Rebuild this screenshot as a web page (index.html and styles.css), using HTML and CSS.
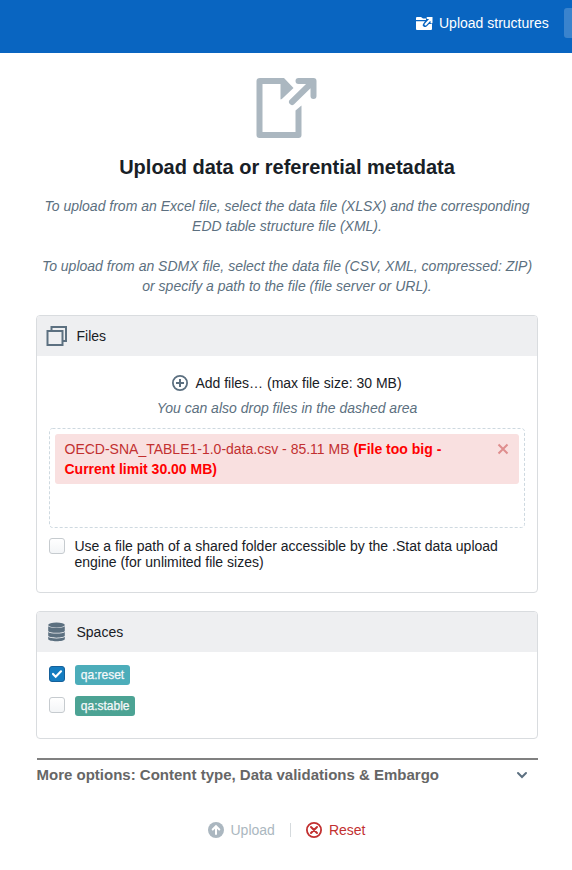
FILE: index.html
```html
<!DOCTYPE html>
<html lang="en">
<head>
<meta charset="utf-8">
<title>Upload data</title>
<link rel="stylesheet" href="styles.css">
</head>
<body>
<header class="navbar">
  <a class="nav-link">
    <svg class="nav-icon" width="18" height="16" viewBox="0 0 18 16"><path fill="#fff" d="M1 3Q1 2 2 2h4l2 1.500h3V5H1zM1 6.200h9L8 9q-1 1.500.5 2.500t3 0L14 9h3v5q0 1-1 1H2q-1 0-1-1z"/><path d="M12.500 3H17v4.500M16.500 3.500l-6 6" fill="none" stroke="#0965c1" stroke-width="3.500"/><path d="M12.500 3H16.500v4.500M16 3.500L10.500 9.500" fill="none" stroke="#fff" stroke-width="2" stroke-linecap="round"/></svg>
    <span>Upload structures</span>
  </a>
  <span class="nav-button"></span>
</header>
<main class="page">
  <section class="intro">
    <svg class="intro-icon" width="62" height="60" viewBox="0 0 62 60" fill="#abb7c0">
      <path d="M4 0H28L37.500 10 28.500 18.500Q24.500 22.500 24.500 21V6H6.500v48h33V32.500l6-5V57q0 3-3 3H3.500Q.5 60 .5 57V3Q.5 0 4 0z"/>
      <path d="M42.500 3h15v15M56.500 4L36 24" fill="none" stroke="#abb7c0" stroke-width="6" stroke-linecap="round" stroke-linejoin="round"/>
    </svg>
    <h1 class="title">Upload data or referential metadata</h1>
    <p class="hint">To upload from an Excel file, select the data file (XLSX) and the corresponding<br>EDD table structure file (XML).</p>
    <p class="hint">To upload from an SDMX file, select the data file (CSV, XML, compressed: ZIP)<br>or specify a path to the file (file server or URL).</p>
  </section>

  <section class="card files">
    <div class="card-head">
      <svg width="20" height="20" viewBox="0 0 20 20" fill="none" stroke="#5c7080" stroke-width="2"><path d="M.5 5h15v14H.5zM4.500 4V1h14.500v14h-3"/></svg>
      <span>Files</span>
    </div>
    <div class="card-body">
      <div class="add">
        <svg width="16" height="16" viewBox="0 0 16 16" fill="none" stroke="#5c7080"><circle cx="8" cy="8" r="7.100" stroke-width="1.800"/><path d="M8 4v8M4 8h8" stroke-width="2"/></svg>
        <span>Add files… (max file size: 30 MB)</span>
      </div>
      <div class="drop-hint">You can also drop files in the dashed area</div>
      <div class="dropzone">
        <svg class="dash" width="476" height="100"><rect x="0.500" y="0.500" width="475" height="99" rx="3"/></svg>
        <div class="file-item">
          <span class="file-name">OECD-SNA_TABLE1-1.0-data.csv - 85.11 MB <strong>(File too big -<br>Current limit 30.00 MB)</strong></span>
          <svg width="12" height="12" viewBox="0 0 12 12"><path d="M1.500 1.500l9 9M10.500 1.500l-9 9" stroke="#df8e8e" stroke-width="2"/></svg>
        </div>
      </div>
      <label class="check-row path-row"><span class="box"></span><span>Use a file path of a shared folder accessible by the .Stat data upload<br>engine (for unlimited file sizes)</span></label>
    </div>
  </section>

  <section class="card spaces">
    <div class="card-head">
      <svg width="20" height="20" viewBox="0 0 20 20" fill="#5c7080"><ellipse cx="9.500" cy="3" rx="8.300" ry="2.600"/><path d="M1.200 4.200c2 2.200 14.600 2.200 16.600 0V8.700c0 2.700-16.600 2.700-16.600 0zM1.200 9.900c2 2.200 14.600 2.200 16.600 0v3.700c0 2.700-16.600 2.700-16.600 0zM1.200 14.800c2 2.200 14.600 2.200 16.600 0v2.200c0 3-16.600 3-16.600 0z"/></svg>
      <span>Spaces</span>
    </div>
    <div class="space-list">
      <label class="check-row"><span class="box checked"><svg width="16" height="16" viewBox="0 0 16 16"><path d="M4 8l2.700 2.700L12 5.300" fill="none" stroke="#fff" stroke-width="2.200" stroke-linecap="round"/></svg></span><span class="tag reset-tag">qa:reset</span></label>
      <label class="check-row"><span class="box"></span><span class="tag stable-tag">qa:stable</span></label>
    </div>
  </section>

  <div class="more">
    <span>More options: Content type, Data validations &amp; Embargo</span>
    <svg width="16" height="16" viewBox="0 0 16 16"><path d="M4 6l4 4 4-4" fill="none" stroke="#5c7080" stroke-width="2" stroke-linecap="round"/></svg>
  </div>

  <footer class="actions">
    <span class="action upload">
      <svg width="16" height="16" viewBox="0 0 16 16"><circle cx="8" cy="8" r="8" fill="#abb7c0"/><path d="M8 12V5M4.700 7.500L8 4.200l3.300 3.300" fill="none" stroke="#fff" stroke-width="2" stroke-linecap="round"/></svg>
      <span>Upload</span>
    </span>
    <span class="divider"></span>
    <span class="action reset">
      <svg width="16" height="16" viewBox="0 0 16 16" fill="none" stroke="#c23030"><circle cx="8" cy="8" r="7.100" stroke-width="1.800"/><path d="M5 5l6 6M11 5l-6 6" stroke-width="2" stroke-linecap="round"/></svg>
      <span>Reset</span>
    </span>
  </footer>
</main>
</body>
</html>
```
FILE: styles.css
```css
* { box-sizing: border-box; }
body {
  margin: 0;
  background: #fff;
  color: #182026;
  font: 14px/20px "Liberation Sans", Arial, sans-serif;
}
svg { display: block; flex: none; }
.navbar {
  height: 53px;
  padding: 8px 0 0 415px;
  background: #0965c1;
  color: #fff;
  display: flex;
  overflow: hidden;
}
.nav-link { display: flex; align-items: center; gap: 6px; height: 30px; width: 149px; flex: none; white-space: nowrap; }
.nav-button { width: 30px; height: 30px; flex: none; border-radius: 3px; background: #3a83cd; }
.page { width: 502px; margin-left: 36px; }
.intro { text-align: center; padding-top: 25px; }
.intro-icon { margin-left: 220px; }
.title { margin: 17px 0 17px; font-size: 20px; line-height: 24px; font-weight: 700; }
.hint { margin: 0 0 20px; font-style: italic; color: #5c7080; white-space: nowrap; }
.card { border: 1px solid #d9dcdf; border-radius: 4px; overflow: hidden; }
.files { height: 278px; margin-top: -1px; }
.card-head { height: 40px; padding-left: 9.5px; display: flex; align-items: center; gap: 10px; background: #eeeff1; }
.card-head svg { overflow: visible; }
.card-body { padding: 17px 12px 0; }
.add { display: flex; align-items: center; justify-content: center; gap: 7px; height: 20px; }
.drop-hint { margin-top: 5px; text-align: center; font-style: italic; color: #5c7080; }
.dropzone { position: relative; height: 100px; margin-top: 10px; padding: 6px; }
.dash { position: absolute; top: 0; left: 0; }
.dash rect { fill: none; stroke: #ced9e0; stroke-dasharray: 3 2; }
.file-item { display: flex; justify-content: space-between; height: 50px; padding: 5px 10px 5px 9.5px; border-radius: 3px; background: #f9e0e0; color: #c23030; }
.file-item strong { color: #f00; }
.file-item svg { margin-top: 4px; }
.check-row { display: flex; gap: 9.5px; line-height: 16px; white-space: nowrap; }
.path-row { margin-top: 10px; }
.box { width: 16px; height: 16px; flex: none; border: 1px solid #c6cbcf; border-radius: 3px; background: linear-gradient(#fff, #f3f5f7); }
.box.checked { border-color: #15609a; background: #157dc0; }
.box.checked svg { margin: -1px; }
.spaces { height: 128px; margin-top: 18px; }
.space-list { padding: 13px 12px; display: flex; flex-direction: column; gap: 11px; }
.space-list .check-row { height: 20px; gap: 10px; }
.space-list .box { margin-top: 1px; }
.tag { height: 20px; padding: 0 5.8px; border-radius: 3px; color: #f5f8fa; font-size: 12px; line-height: 20px; -webkit-text-stroke: 0.25px #f5f8fa; }
.reset-tag { background: #4cadba; }
.stable-tag { background: #4ca394; }
.more { height: 35px; margin: 19px 0 0 0.5px; padding: 5px 8px 0 0; border-top: 2px solid #808080; display: flex; justify-content: space-between; color: #666; font-weight: 700; }
.more span { font-size: 15px; }
.more svg { margin-top: 2px; }
.actions { height: 20px; margin-top: 27px; padding-left: 171.5px; display: flex; align-items: center; }
.action { display: flex; align-items: center; gap: 7px; }
.upload { color: #abb7c0; }
.reset { color: #c23030; }
.divider { width: 1px; height: 14px; margin: 0 15px; background: #d5dadd; }
```
